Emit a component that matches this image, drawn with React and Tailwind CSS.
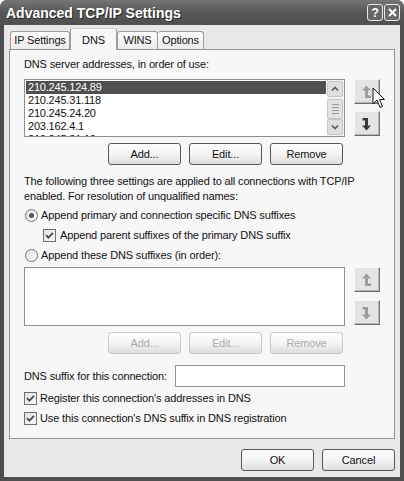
import React from "react";

const sans = "font-['Liberation_Sans',Arial,sans-serif]";

function Btn({ children, disabled }) {
  return (
    <div
      className={`flex h-[22px] w-[73px] items-center justify-center rounded-[3px] border bg-gradient-to-b from-[#fefefe] via-[#f4f4f4] to-[#dedede] text-[11px] ${
        disabled ? "border-[#c8c8c8] text-[#ababab]" : "border-[#575757] text-[#111]"
      }`}
    >
      {children}
    </div>
  );
}

function ArrowUp({ color }) {
  return (
    <svg width="10" height="14" viewBox="0 0 10 14">
      <polygon points="0,5.5 4.5,0.5 9,5.5" fill={color} />
      <rect x="3" y="5" width="3" height="8" fill={color} />
      <rect x="3" y="10.5" width="6" height="2.5" fill={color} />
    </svg>
  );
}

function ArrowDown({ color }) {
  return (
    <svg width="10" height="14" viewBox="0 0 10 14">
      <polygon points="0,8.5 4.5,13.5 9,8.5" fill={color} />
      <rect x="3" y="1" width="3" height="8" fill={color} />
      <rect x="0.5" y="1" width="5.5" height="2.5" fill={color} />
    </svg>
  );
}

function MoveBtn({ children }) {
  return (
    <div className="flex h-[25px] w-[26px] items-center justify-center border border-t-[#f8f8f8] border-l-[#f8f8f8] border-r-[#7a7a7a] border-b-[#6a6a6a] bg-[#e4e4e4] shadow-[inset_-1px_-1px_0_#b5b5b5]">
      {children}
    </div>
  );
}

function Radio({ checked }) {
  return (
    <div className="flex h-[13px] w-[13px] shrink-0 items-center justify-center rounded-full border border-[#6f6f6f] bg-gradient-to-br from-[#e2e2e2] to-[#fbfbfb]">
      {checked && <div className="h-[5px] w-[5px] rounded-full bg-[#555]" />}
    </div>
  );
}

function Check() {
  return (
    <div className="flex h-[13px] w-[13px] shrink-0 items-center justify-center border border-[#6f6f6f] bg-gradient-to-br from-[#e0e0e0] to-[#fbfbfb]">
      <svg width="9" height="9" viewBox="0 0 9 9">
        <path d="M1 4.2 L3.4 6.6 L8 1.8" stroke="#4a4a4a" strokeWidth="1.8" fill="none" />
      </svg>
    </div>
  );
}

function ScrollBar() {
  return (
    <div className="flex w-[17px] shrink-0 flex-col bg-[#f3f3f3] py-[1px] pr-[1px]">
      <div className="flex h-[16px] items-center justify-center rounded-[2px] border border-[#c6c6c6] bg-[#dedede]">
        <svg width="8" height="6" viewBox="0 0 8 6">
          <path d="M1 4.5 L4 1.5 L7 4.5" stroke="#555" strokeWidth="1.6" fill="none" />
        </svg>
      </div>
      <div className="mt-[2px] flex h-[20px] flex-col items-center justify-center gap-[2px] rounded-[2px] border border-[#c6c6c6] bg-[#e2e2e2]">
        <div className="h-px w-[7px] bg-[#9a9a9a]" />
        <div className="h-px w-[7px] bg-[#9a9a9a]" />
        <div className="h-px w-[7px] bg-[#9a9a9a]" />
        <div className="h-px w-[7px] bg-[#9a9a9a]" />
      </div>
      <div className="flex-1" />
      <div className="flex h-[16px] items-center justify-center rounded-[2px] border border-[#c6c6c6] bg-[#dedede]">
        <svg width="8" height="6" viewBox="0 0 8 6">
          <path d="M1 1.5 L4 4.5 L7 1.5" stroke="#555" strokeWidth="1.6" fill="none" />
        </svg>
      </div>
    </div>
  );
}

const servers = ["210.245.124.89", "210.245.31.118", "210.245.24.20", "203.162.4.1", "210.245.31.10"];

export default function App() {
  return (
    <div className={`h-[481px] w-[404px] bg-white ${sans} text-[11px] tracking-[-0.14px] text-[#111]`}>
      <div className="flex h-full flex-col rounded-t-[7px] bg-[#4e4e4e]">
        {/* title bar */}
        <div className="flex h-[25px] items-center justify-between rounded-t-[7px] bg-gradient-to-b from-[#767676] via-[#575757] to-[#505050] pl-[6px] pr-[4px]">
          <span className="text-[14px] font-bold leading-none tracking-normal text-white [text-shadow:1px_1px_0_#2a2a2a]">
            Advanced TCP/IP Settings
          </span>
          <div className="flex gap-[1px]">
            <div className="flex h-[17px] w-[16px] items-center justify-center rounded-[3px] border border-[#e8e8e8] bg-[#666] text-[12px] font-bold leading-none text-white">
              ?
            </div>
            <div className="flex h-[17px] w-[16px] items-center justify-center rounded-[3px] border border-[#e8e8e8] bg-[#6a6a6a]">
              <svg width="9" height="9" viewBox="0 0 9 9">
                <path d="M1 1 L8 8 M8 1 L1 8" stroke="white" strokeWidth="2" />
              </svg>
            </div>
          </div>
        </div>

        {/* body */}
        <div className="mx-[4px] mb-[4px] flex flex-1 flex-col bg-[#e8e8e8] px-[5px]">
          {/* tabs */}
          <div className="flex h-[24px] items-end pl-[1px] pt-[3px]">
            <div className="flex h-[18px] w-[60px] items-center justify-center rounded-t-[3px] border border-b-0 border-[#9c9c9c] bg-gradient-to-b from-[#fdfdfd] to-[#ececec]">
              IP Settings
            </div>
            <div className="relative z-10 -mb-px flex h-[22px] w-[47px] items-start justify-center rounded-t-[3px] border border-b-0 border-[#9c9c9c] border-t-[#d0d0d0] bg-[#f7f7f7] pt-[3px]">
              DNS
            </div>
            <div className="flex h-[18px] w-[41px] items-center justify-center rounded-t-[3px] border border-b-0 border-[#9c9c9c] bg-gradient-to-b from-[#fdfdfd] to-[#ececec]">
              WINS
            </div>
            <div className="flex h-[18px] w-[46px] items-center justify-center rounded-t-[3px] border border-b-0 border-l-0 border-[#9c9c9c] bg-gradient-to-b from-[#fdfdfd] to-[#ececec]">
              Options
            </div>
          </div>

          {/* panel */}
          <div className="flex h-[390px] flex-col border border-[#919191] bg-[#f7f7f7] pl-[14px] pt-[7px] leading-[15px]">
            <div>DNS server addresses, in order of use:</div>

            <div className="mt-[7px] flex items-start">
              <div className="flex h-[58px] w-[321px] border border-[#8f8f8f] bg-white">
                <div className="flex-1 overflow-hidden p-[1px] text-[11px] leading-[13px] tracking-[-0.2px]">
                  {servers.map((s, i) => (
                    <div key={s} className={`pl-[2px] ${i === 0 ? "bg-[#4f4f4f] text-white" : ""}`}>
                      {s}
                    </div>
                  ))}
                </div>
                <ScrollBar />
              </div>
              <div className="relative ml-[9px] flex flex-col gap-[7px]">
                <MoveBtn>
                  <ArrowUp color="#9c9c9c" />
                </MoveBtn>
                <MoveBtn>
                  <ArrowDown color="#3a3a3a" />
                </MoveBtn>
                {/* mouse pointer */}
                <svg className="absolute left-[18px] top-[8px]" width="14" height="22" viewBox="0 0 14 22">
                  <path
                    d="M1 1 L1 17 L5 13 L8 20.5 L10.5 19.5 L7.5 12.5 L12.5 12.5 Z"
                    fill="white"
                    stroke="#111"
                    strokeWidth="1"
                    strokeLinejoin="miter"
                  />
                </svg>
              </div>
            </div>

            <div className="mt-[6px] flex w-[321px] justify-end gap-[8px] pr-[2px]">
              <Btn>Add...</Btn>
              <Btn>Edit...</Btn>
              <Btn>Remove</Btn>
            </div>

            <div className="mt-[9px]">
              The following three settings are applied to all connections with TCP/IP
              <br />
              enabled. For resolution of unqualified names:
            </div>

            <div className="mt-[4px] flex items-center gap-[3px] pl-px">
              <Radio checked />
              <span>Append primary and connection specific DNS suffixes</span>
            </div>
            <div className="mt-[5px] flex items-center gap-[4px] pl-[19px]">
              <Check />
              <span>Append parent suffixes of the primary DNS suffix</span>
            </div>
            <div className="mt-[5px] flex items-center gap-[3px] pl-px">
              <Radio />
              <span>Append these DNS suffixes (in order):</span>
            </div>

            <div className="mt-[4px] flex items-start">
              <div className="h-[59px] w-[321px] border border-[#8f8f8f] bg-white" />
              <div className="ml-[9px] flex flex-col gap-[8px]">
                <MoveBtn>
                  <ArrowUp color="#9c9c9c" />
                </MoveBtn>
                <MoveBtn>
                  <ArrowDown color="#9c9c9c" />
                </MoveBtn>
              </div>
            </div>

            <div className="mt-[6px] flex w-[321px] justify-end gap-[8px] pr-[2px]">
              <Btn disabled>Add...</Btn>
              <Btn disabled>Edit...</Btn>
              <Btn disabled>Remove</Btn>
            </div>

            <div className="mt-[11px] flex w-[321px] items-center justify-between">
              <span>DNS suffix for this connection:</span>
              <div className="h-[22px] w-[170px] border border-[#8f8f8f] bg-white" />
            </div>

            <div className="mt-[4px] flex items-center gap-[3px]">
              <Check />
              <span>Register this connection's addresses in DNS</span>
            </div>
            <div className="mt-[5px] flex items-center gap-[3px]">
              <Check />
              <span>Use this connection's DNS suffix in DNS registration</span>
            </div>
          </div>

          {/* bottom buttons */}
          <div className="mt-[10px] flex justify-end gap-[8px]">
            <Btn>OK</Btn>
            <Btn>Cancel</Btn>
          </div>
        </div>
      </div>
    </div>
  );
}
